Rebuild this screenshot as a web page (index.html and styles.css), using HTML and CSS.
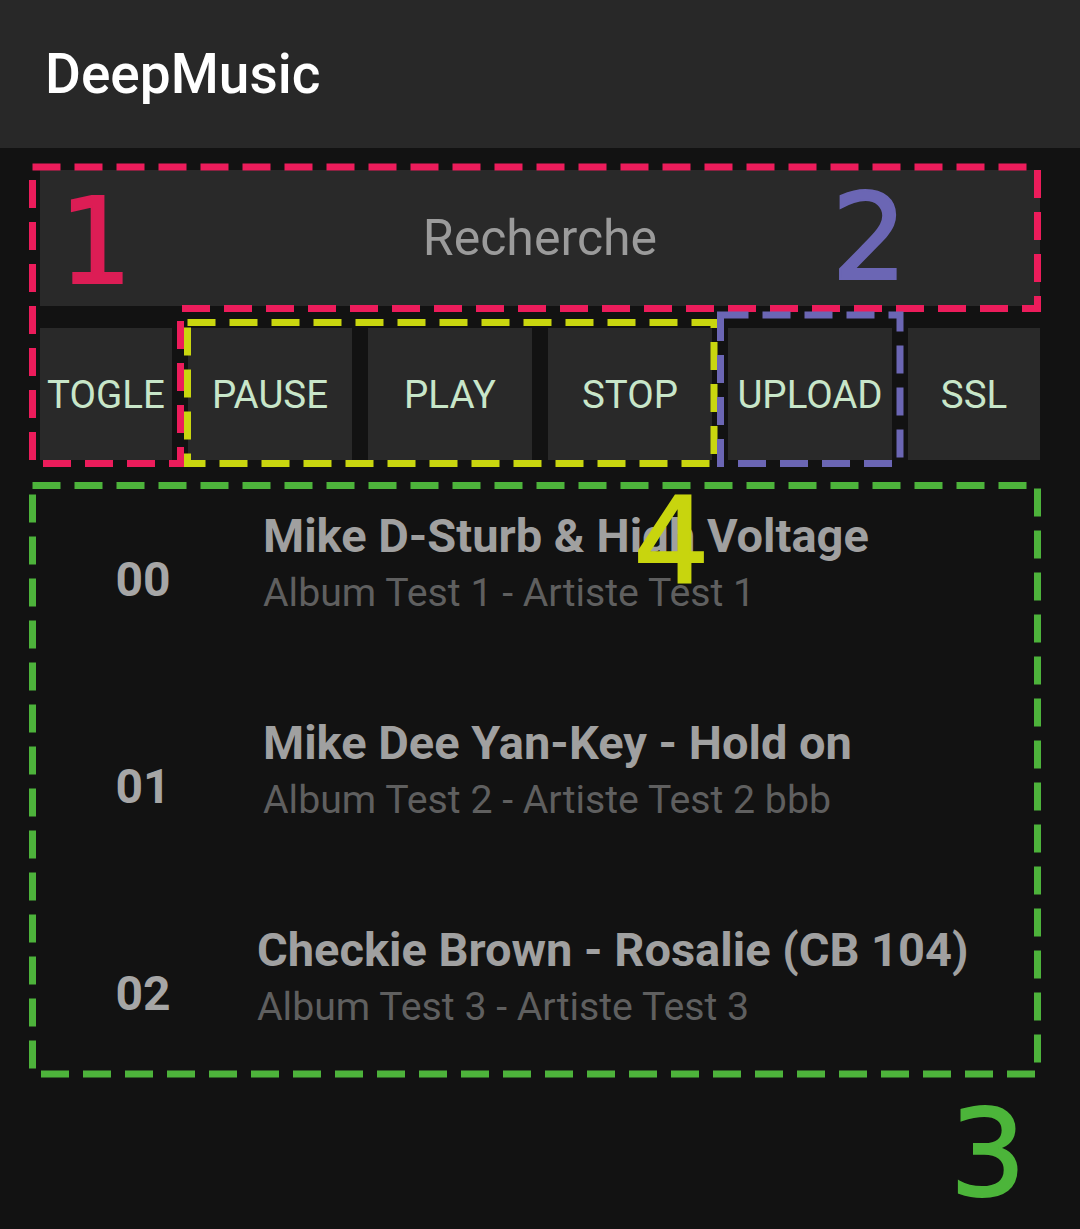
FILE: index.html
```html
<!DOCTYPE html>
<html lang="fr">
<head>
<meta charset="utf-8">
<title>DeepMusic</title>
<link rel="stylesheet" href="styles.css">
</head>
<body>
<header class="appbar">
  <h1 class="appbar-title">DeepMusic</h1>
</header>
<main class="content">
  <div class="search">Recherche</div>
  <div class="controls">
    <button class="btn btn-narrow">TOGLE</button>
    <button class="btn">PAUSE</button>
    <button class="btn">PLAY</button>
    <button class="btn">STOP</button>
    <button class="btn">UPLOAD</button>
    <button class="btn btn-narrow">SSL</button>
  </div>
  <ul class="tracks">
    <li class="track">
      <span class="track-num">00</span>
      <div class="track-info">
        <div class="track-title">Mike D-Sturb &amp; High Voltage</div>
        <div class="track-sub">Album Test 1 - Artiste Test 1</div>
      </div>
    </li>
    <li class="track">
      <span class="track-num">01</span>
      <div class="track-info">
        <div class="track-title">Mike Dee Yan-Key - Hold on</div>
        <div class="track-sub">Album Test 2 - Artiste Test 2 bbb</div>
      </div>
    </li>
    <li class="track">
      <span class="track-num">02</span>
      <div class="track-info track-info-wide">
        <div class="track-title">Checkie Brown - Rosalie (CB 104)</div>
        <div class="track-sub">Album Test 3 - Artiste Test 3</div>
      </div>
    </li>
  </ul>
</main>
<svg class="annotations" width="1080" height="1229" viewBox="0 0 1080 1229">
  <path class="zone zone-pink" d="M32.5 167 H1037.5 V308.5 H180.5 V463.5 H32.5 Z"/>
  <path class="zone zone-yellow" d="M187.5 322.5 H714 V463.5 H187.5 Z"/>
  <path class="zone zone-purple" d="M720.5 315 H900 V463.5 H720.5 Z"/>
  <path class="zone zone-green" d="M32.5 485.5 H1037.5 V1074 H32.5 Z"/>
  <text class="label label-mono label-pink" x="93.5" y="283">1</text>
  <text class="label label-purple" x="869.5" y="279">2</text>
  <text class="label label-green" x="988" y="1195">3</text>
  <text class="label label-yellow" x="671.5" y="583">4</text>
</svg>
</body>
</html>
```
FILE: styles.css
```css
* {
  box-sizing: border-box;
}

html, body {
  margin: 0;
  padding: 0;
}

body {
  position: relative;
  width: 1080px;
  min-height: 1229px;
  background: #121212;
  font-family: Roboto, "Liberation Sans", sans-serif;
  overflow: hidden;
}

.appbar {
  height: 148px;
  background: #282828;
  display: flex;
  align-items: center;
  padding-left: 45px;
}

.appbar-title {
  margin: 0;
  font-size: 55px;
  font-weight: 500;
  color: #ffffff;
}

.content {
  padding: 22px 40px 0 40px;
}

.search {
  height: 136px;
  background: #292929;
  display: flex;
  align-items: center;
  justify-content: center;
  font-size: 50px;
  color: #9b9b9b;
}

.controls {
  margin-top: 22px;
  display: flex;
  gap: 16px;
  height: 132px;
}

.btn {
  width: 164px;
  height: 132px;
  border: none;
  padding: 0;
  background: #292929;
  color: #c8e6c9;
  font-family: Roboto, "Liberation Sans", sans-serif;
  font-size: 38.5px;
  font-weight: 400;
  letter-spacing: 0;
}

.btn-narrow {
  width: 132px;
}

.tracks {
  list-style: none;
  margin: 16px 0 0 0;
  padding: 0;
}

.track {
  height: 207px;
  display: flex;
}

.track-num {
  width: 206px;
  align-self: center;
  text-align: center;
  font-size: 48px;
  font-weight: 700;
  color: #a6a6a6;
}

.track-info {
  margin-left: 17px;
  padding-top: 32px;
}

.track-info-wide {
  margin-left: 11px;
}

.track-title {
  font-size: 47px;
  line-height: 55px;
  font-weight: 700;
  color: #a0a0a0;
}

.track-sub {
  margin-top: 7px;
  font-size: 39.25px;
  line-height: 46px;
  color: #5f5f5f;
}

.annotations {
  position: absolute;
  top: 0;
  left: 0;
  pointer-events: none;
}

.zone {
  fill: none;
  stroke-width: 7;
  stroke-dasharray: 28 14;
}

.zone-pink { stroke: #ec1c5b; }
.zone-yellow { stroke: #c9d60f; }
.zone-purple { stroke: #6b66b4; }
.zone-green { stroke: #4db33b; }

.label {
  font-family: "DejaVu Sans", sans-serif;
  font-size: 120px;
  text-anchor: middle;
  stroke-width: 2;
  stroke-linejoin: miter;
}

.label-mono {
  font-family: "DejaVu Sans Mono", monospace;
}

.label-pink { fill: #dc1d55; stroke: #dc1d55; }
.label-purple { fill: #6b66b4; stroke: #6b66b4; }
.label-green { fill: #4cb53a; stroke: #4cb53a; }
.label-yellow { fill: #c8d50e; stroke: #c8d50e; }
```
